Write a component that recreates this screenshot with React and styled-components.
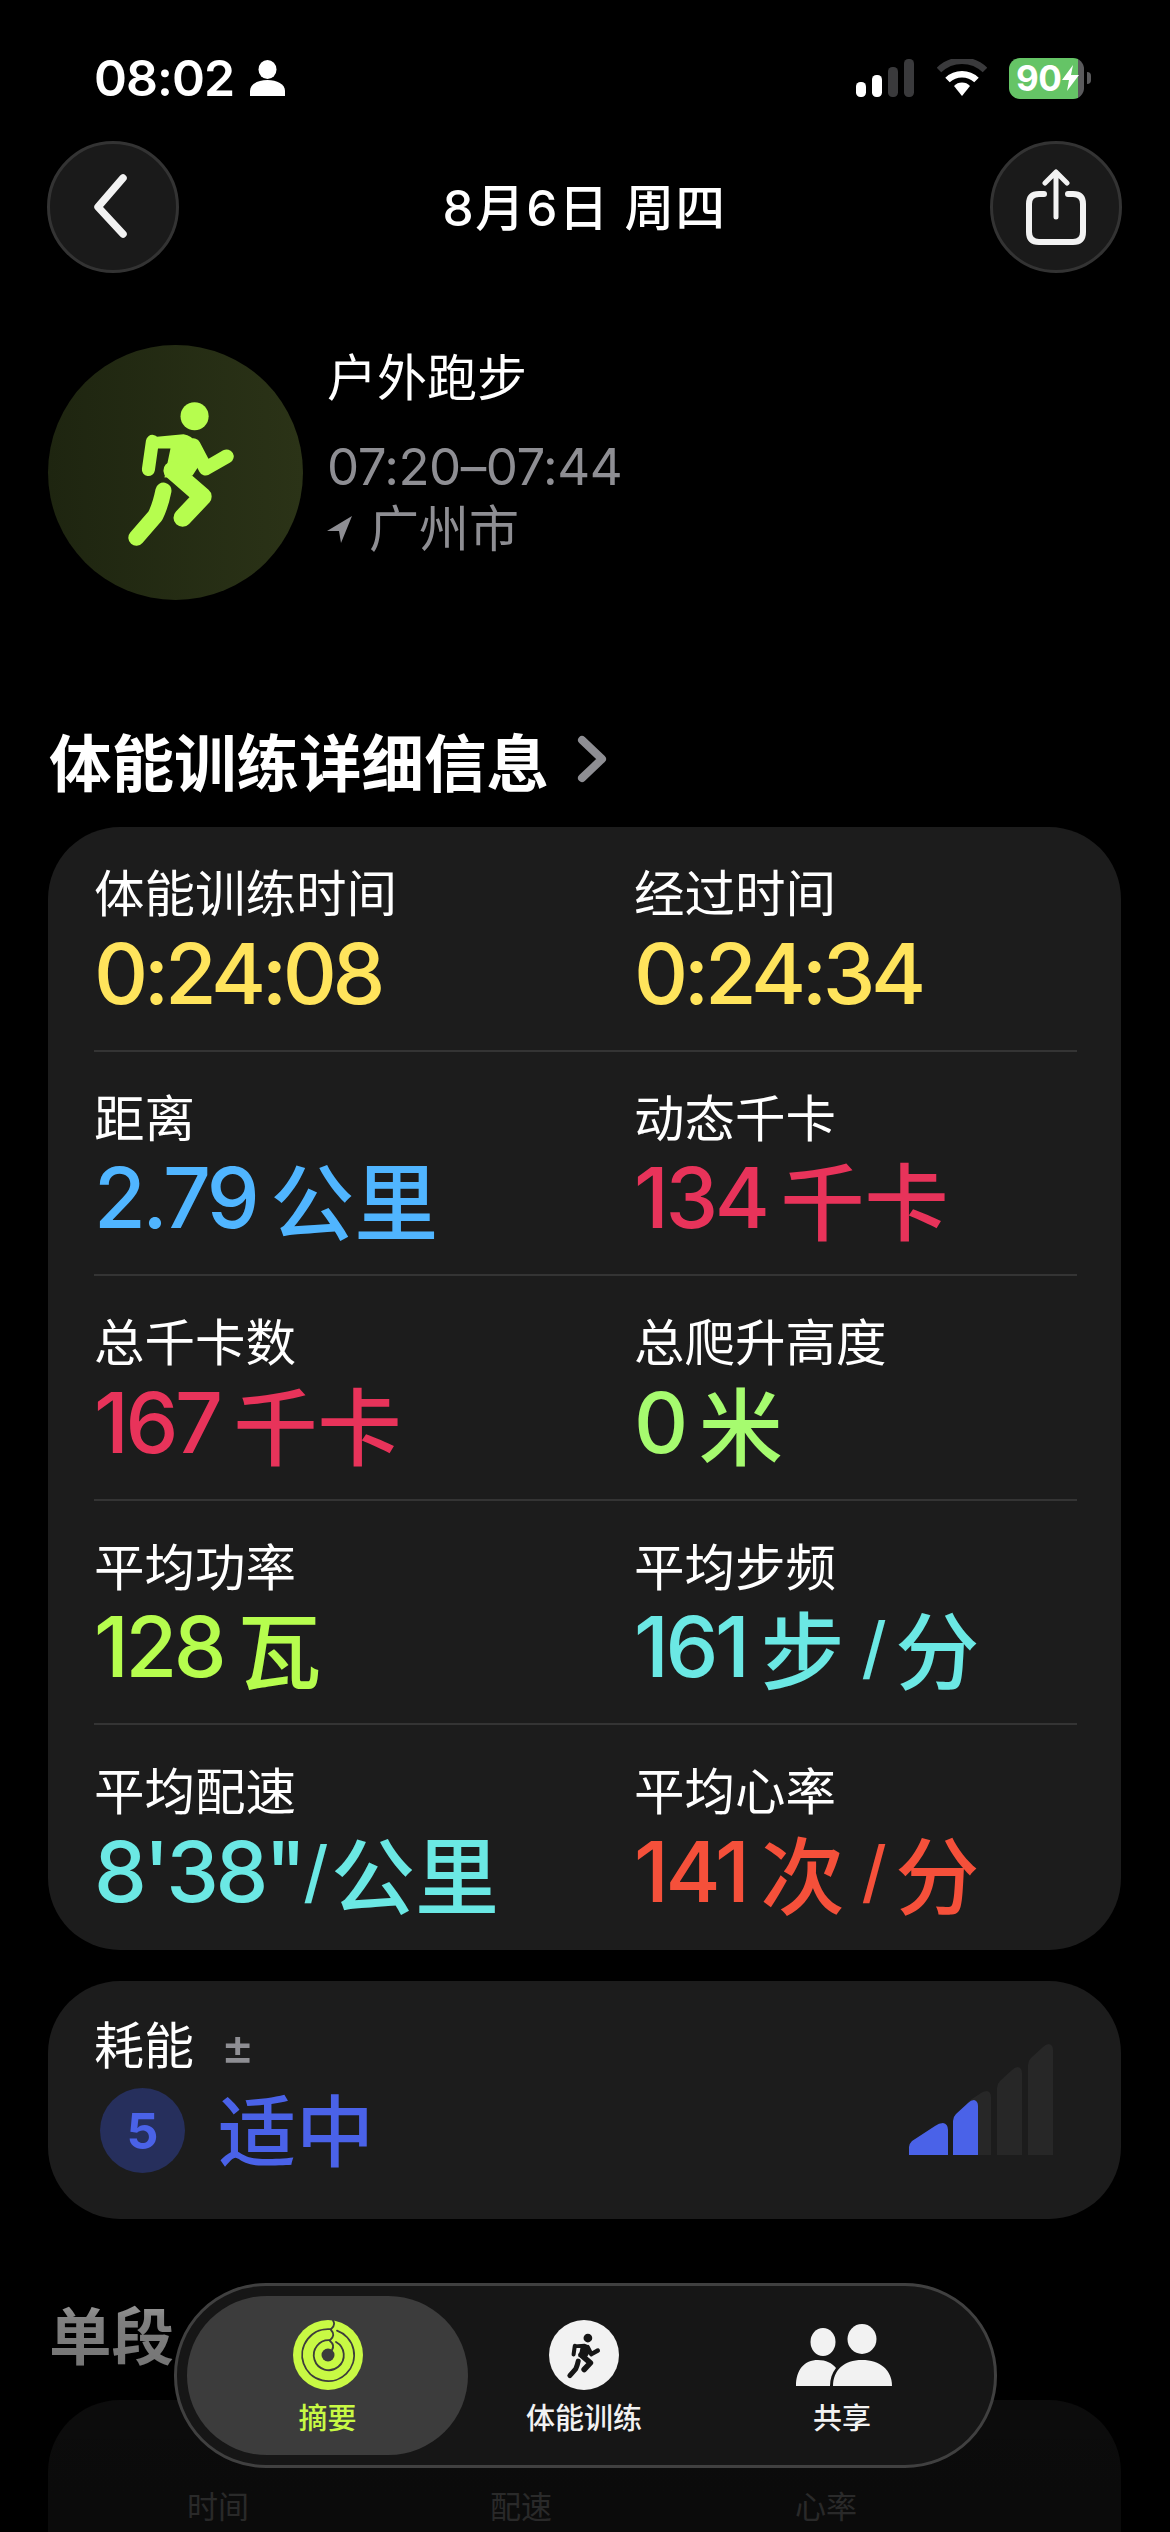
import styled, { createGlobalStyle } from "styled-components";

const GlobalStyle = createGlobalStyle`
  html, body {
    margin: 0;
    padding: 0;
    background: #000;
  }
  * {
    box-sizing: border-box;
  }
`;

const FONT = `Inter, "Noto Sans CJK SC", sans-serif`;

const Page = styled.div`
  position: relative;
  width: 1170px;
  height: 2532px;
  overflow: hidden;
  background: #000;
  color: #fff;
  font-family: ${FONT};
`;

const StatusBar = styled.div`
  display: flex;
  align-items: center;
  justify-content: space-between;
  height: 141px;
  padding: 45px 79px 30px 94px;
`;

const StatusLeft = styled.div`
  display: flex;
  align-items: center;
  gap: 16px;
`;

const Clock = styled.span`
  font-size: 50px;
  font-weight: 600;
  line-height: 50px;
  letter-spacing: -1px;
`;

const StatusRight = styled.div`
  display: flex;
  align-items: center;
  gap: 22px;
`;

const Battery = styled.div`
  display: flex;
  align-items: center;
  gap: 3px;
`;

const BatteryBody = styled.div`
  display: flex;
  align-items: center;
  width: 75px;
  height: 41px;
  border-radius: 11px;
  padding-left: 7px;
  gap: 1px;
  background: linear-gradient(90deg, #65c466 92%, #5a5a5c 92%);
  font-size: 35px;
  font-weight: 700;
  letter-spacing: -0.5px;
  color: #fff;
`;

const BatteryNub = styled.div`
  width: 4px;
  height: 12px;
  border-radius: 0 6px 6px 0;
  background: #5a5a5c;
`;

const NavBar = styled.div`
  display: flex;
  align-items: center;
  justify-content: space-between;
  padding: 0 48px 0 47px;
`;

const RoundButton = styled.div`
  display: flex;
  align-items: center;
  justify-content: center;
  width: 132px;
  height: 132px;
  border-radius: 50%;
  background: #1a1a1a;
  border: 3px solid #333;
`;

const NavTitle = styled.div`
  font-size: 49.5px;
  font-weight: 500;
  letter-spacing: 1.5px;
  margin-bottom: 5px;
`;

const Hero = styled.div`
  display: flex;
  gap: 24px;
  padding-left: 48px;
  margin-top: 72px;
`;

const HeroBadge = styled.div`
  display: flex;
  width: 255px;
  height: 255px;
  border-radius: 50%;
  background: linear-gradient(90deg, #1e2510, #2b3317);
`;

const HeroText = styled.div`
  display: flex;
  flex-direction: column;
`;

const HeroTitle = styled.div`
  font-size: 50px;
  line-height: 60px;
  margin-top: 3px;
`;

const HeroTime = styled.div`
  font-size: 51px;
  line-height: 60px;
  margin-top: 29px;
  color: #8e8e93;
  letter-spacing: -0.5px;
`;

const HeroPlace = styled.div`
  display: flex;
  align-items: center;
  gap: 17px;
  font-size: 50px;
  line-height: 60px;
  margin-top: 2px;
  color: #8e8e93;
`;

const SectionTitle = styled.div`
  display: flex;
  align-items: center;
  gap: 28px;
  padding-left: 49px;
  margin-top: ${(p) => p.$top}px;
  height: 80px;
  font-size: 62.5px;
  font-weight: 700;
`;

const Card = styled.div`
  margin: ${(p) => p.$top}px 49px 0 48px;
  border-radius: 72px;
  background: #1c1c1c;
`;

const MetricList = styled.div`
  padding: 0 44px 0 46px;
`;

const MetricRow = styled.div`
  display: grid;
  grid-template-columns: 540px 1fr;
  height: 224.6px;
  padding-top: 34px;
  border-bottom: 2px solid ${(p) => (p.$last ? "transparent" : "#343434")};
`;

const Metric = styled.div`
  display: flex;
  flex-direction: column;
`;

const Label = styled.div`
  font-size: 50.5px;
  line-height: 66px;
`;

const Value = styled.div`
  display: flex;
  align-items: center;
  height: 92px;
  font-size: 84px;
  font-weight: 500;
  letter-spacing: ${(p) => (p.$time ? -4.4 : -3.4)}px;
  white-space: pre;
  color: ${(p) => p.$color};
`;

const Unit = styled.span`
  font-size: 84px;
  letter-spacing: 0;
  margin-left: ${(p) => p.$gap ?? 14}px;
`;

const Slash = styled.span`
  font-size: 68px;
  margin: 0 ${(p) => (p.$tight ? "6px 0 0" : "12px 0 17px")};
`;

const EffortCard = styled(Card)`
  display: flex;
  align-items: flex-end;
  justify-content: space-between;
  height: 238px;
  padding: 46px 68px 63px 46px;
`;

const EffortLeft = styled.div`
  display: flex;
  flex-direction: column;
`;

const EffortLabel = styled.div`
  display: flex;
  align-items: center;
  gap: 27px;
  font-size: 50px;
  line-height: 50px;
  margin-top: 24px;
`;

const PlusMinus = styled.span`
  font-size: 50px;
  font-weight: 500;
  color: #8e8e93;
`;

const EffortValue = styled.div`
  display: flex;
  align-items: center;
  gap: 33px;
  margin: 8px 0 -27px 6px;
  font-size: 78px;
  font-weight: 500;
  color: #4a62e8;
`;

const EffortLevel = styled.span`
  margin-top: -8px;
`;

const EffortBadge = styled.div`
  display: flex;
  align-items: center;
  justify-content: center;
  width: 85px;
  height: 85px;
  border-radius: 50%;
  background: #262f5c;
  font-size: 50px;
  font-weight: 700;
`;

const SplitHead = styled.div`
  display: grid;
  grid-template-columns: 303px 305px 1fr;
  height: 300px;
  padding: 82px 0 0 139px;
  font-size: 31px;
  color: #6a6a6a;
`;

const Fade = styled.div`
  position: absolute;
  left: 0;
  right: 0;
  top: 2230px;
  bottom: 0;
  background: linear-gradient(
    180deg,
    rgba(0, 0, 0, 0) 0%,
    rgba(0, 0, 0, 0.5) 30%,
    rgba(0, 0, 0, 0.58) 60%,
    rgba(0, 0, 0, 0.62) 100%
  );
`;

const TabBar = styled.div`
  position: absolute;
  left: 174px;
  top: 2283px;
  display: flex;
  width: 823px;
  height: 185px;
  padding: 10px 10px;
  border-radius: 92px;
  background: #161616;
  border: 3px solid #404040;
`;

const Tab = styled.div`
  display: flex;
  flex-direction: column;
  align-items: center;
  width: ${(p) => p.$width}px;
  padding-top: 24px;
  border-radius: 80px;
  background: ${(p) => (p.$active ? "#3c3c3c" : "transparent")};
`;

const TabIconSlot = styled.div`
  display: flex;
  align-items: center;
  justify-content: center;
  height: 70px;
  margin-left: ${(p) => p.$shift || 0}px;
`;

const WorkoutCircle = styled.div`
  display: flex;
  width: 70px;
  height: 70px;
  border-radius: 50%;
  background: #f2f2f2;
`;

const TabLabel = styled.div`
  margin-top: 12px;
  font-size: 29px;
  line-height: 34px;
  font-weight: 500;
  color: ${(p) => (p.$active ? "#c8f944" : "#f2f2f2")};
`;

const metrics = [
  [
    { label: "体能训练时间", color: "#ffe45c", num: "0:24:08", time: true },
    { label: "经过时间", color: "#ffe45c", num: "0:24:34", time: true },
  ],
  [
    { label: "距离", color: "#50b5ff", num: "2.79", unit: "公里" },
    { label: "动态千卡", color: "#e8335a", num: "134", unit: "千卡" },
  ],
  [
    { label: "总千卡数", color: "#e8335a", num: "167", unit: "千卡" },
    { label: "总爬升高度", color: "#a6fb6f", num: "0", unit: "米" },
  ],
  [
    { label: "平均功率", color: "#b6fd4e", num: "128", unit: "瓦" },
    { label: "平均步频", color: "#6be8e4", num: "161", unit: "步", per: "分" },
  ],
  [
    { label: "平均配速", color: "#6be8e4", num: `8'38"`, per: "公里", tight: true },
    { label: "平均心率", color: "#f5503a", num: "141", unit: "次", per: "分" },
  ],
];

const Runner = ({ color, view }) => (
  <svg width="100%" height="100%" viewBox={view}>
    <circle cx="146" cy="71" r="14" fill={color} />
    <path d="M103 92 L135 89 Q143 90 148 98 L155 113 L144 130 L116 132 L122 103 L106 103 Z" fill={color} />
    <path d="M104 96 L100 124" stroke={color} strokeWidth="13" strokeLinecap="round" fill="none" />
    <path d="M145 100 L157 123 L178 111" stroke={color} strokeWidth="14" strokeLinecap="round" strokeLinejoin="round" fill="none" />
    <path d="M124 125 L154 151 L134 172" stroke={color} strokeWidth="18" strokeLinecap="round" strokeLinejoin="round" fill="none" />
    <path d="M115 145 Q112 160 107 170 L88 192" stroke={color} strokeWidth="16" strokeLinecap="round" strokeLinejoin="round" fill="none" />
  </svg>
);

const Rings = () => (
  <svg width="70" height="70" viewBox="0 0 70 70">
    <circle cx="35" cy="35" r="35" fill="#c8f944" />
    <circle cx="35" cy="35" r="6.5" fill="#3c3c3c" />
    <g fill="none" stroke="#3c3c3c" strokeWidth="1.8" strokeLinecap="round">
      <path d="M38 9.2 A26 26 0 1 0 44 10.6" />
      <path d="M37 20.2 A15 15 0 1 0 43 22" />
      <path d="M40 0.4 Q43 5 38 9.2" />
      <path d="M38 10 Q43 15 37 20.2" />
      <path d="M37 21 Q42 25 39 30" />
    </g>
  </svg>
);

const People = () => (
  <svg width="96" height="63" viewBox="0 0 96 63" fill="#f2f2f2">
    <ellipse cx="27" cy="18" rx="12.5" ry="14" />
    <ellipse cx="66" cy="15" rx="14.5" ry="15" />
    <path d="M0 62 C0 46 8 36 22 36 C30 36 36 39 40 44 C36 49 34 55 34 62 Z" />
    <path d="M37 62 C37 46 48 36 66 36 C84 36 96 46 96 62 Z" />
  </svg>
);

const Strength = () => (
  <svg width="144" height="112" viewBox="0 0 144 112">
    <g fill="#272727">
      <path d="M57 111 V64 Q57 60 60 57 L72 49 Q75 47 78 47 Q82 48 82 53 V111 Z" />
      <path d="M88 111 V44 Q88 40 91 37 L103 26 Q106 23 109 23 Q113 24 113 29 V111 Z" />
      <path d="M119 111 V21 Q119 17 122 14 L134 3 Q137 0 140 0 Q144 1 144 6 V111 Z" />
    </g>
    <g fill="#4a62e8">
      <path d="M0 111 V103 Q0 100 3 97 L26 82 Q30 79 34 79 Q39 80 39 86 V111 Z" />
      <path d="M44 111 V77 Q44 73 47 70 L59 59 Q62 56 65 56 Q69 57 69 62 V111 Z" />
    </g>
  </svg>
);

const App = () => (
  <Page>
    <GlobalStyle />
    <StatusBar>
      <StatusLeft>
        <Clock>08:02</Clock>
        <svg width="35" height="36" viewBox="0 0 35 36" fill="#fff">
          <ellipse cx="17.5" cy="9.5" rx="9" ry="9.5" />
          <path d="M0 36 V31 C0 24 8 20 17.5 20 C27 20 35 24 35 31 V36 Z" />
        </svg>
      </StatusLeft>
      <StatusRight>
        <svg width="59" height="38" viewBox="0 0 59 38">
          <rect x="0" y="23" width="10" height="15" rx="4.5" fill="#fff" />
          <rect x="16" y="16" width="10" height="22" rx="4.5" fill="#fff" />
          <rect x="32" y="8" width="10" height="30" rx="4.5" fill="#3a3a3c" />
          <rect x="48" y="0" width="10" height="38" rx="4.5" fill="#3a3a3c" />
        </svg>
        <svg width="50" height="38" viewBox="0 0 50 38" fill="none">
          <path d="M2 11 A33 33 0 0 1 48 11" stroke="#3a3a3c" strokeWidth="6.5" />
          <path d="M10.5 21 A21 21 0 0 1 39.5 21" stroke="#fff" strokeWidth="6.5" />
          <path d="M17 27 A11 11 0 0 1 33 27 L25 37 Z" fill="#fff" />
        </svg>
        <Battery>
          <BatteryBody>
            90
            <svg width="17" height="26" viewBox="0 0 17 26" fill="#fff">
              <path d="M11 0 L0 15 H7 L5 26 L17 10 H9 Z" />
            </svg>
          </BatteryBody>
          <BatteryNub />
        </Battery>
      </StatusRight>
    </StatusBar>

    <NavBar>
      <RoundButton>
        <svg width="50" height="70" viewBox="0 0 50 70" fill="none">
          <path d="M35 6 L10 35 L35 62" stroke="#f2f2f2" strokeWidth="7.5" strokeLinecap="round" strokeLinejoin="round" />
        </svg>
      </RoundButton>
      <NavTitle>8月6日 周四</NavTitle>
      <RoundButton>
        <svg width="62" height="76" viewBox="0 0 62 76" fill="none" stroke="#f2f2f2" strokeLinecap="round" strokeLinejoin="round">
          <path d="M19 25 H14 Q4 25 4 35 V63 Q4 73 14 73 H48 Q58 73 58 63 V35 Q58 25 48 25 H43" strokeWidth="6" />
          <path d="M31 48 V4 M20 14 L31 3 L42 14" strokeWidth="5" />
        </svg>
      </RoundButton>
    </NavBar>

    <Hero>
      <HeroBadge>
        <Runner color="#b6fd4e" view="0 0 254 254" />
      </HeroBadge>
      <HeroText>
        <HeroTitle>户外跑步</HeroTitle>
        <HeroTime>07:20–07:44</HeroTime>
        <HeroPlace>
          <svg width="25" height="27" viewBox="0 0 25 27" fill="#8e8e93">
            <path d="M25 0 L0 15 L12 15 L14 27 Z" />
          </svg>
          广州市
        </HeroPlace>
      </HeroText>
    </Hero>

    <SectionTitle $top={119}>
      体能训练详细信息
      <svg width="30" height="48" viewBox="0 0 30 48" fill="none">
        <path d="M5 5 L25 24 L5 43" stroke="#8e8e93" strokeWidth="8" strokeLinecap="round" strokeLinejoin="round" />
      </svg>
    </SectionTitle>

    <Card $top={28}>
      <MetricList>
        {metrics.map((row, i) => (
          <MetricRow key={i} $last={i === metrics.length - 1}>
            {row.map((m) => (
              <Metric key={m.label}>
                <Label>{m.label}</Label>
                <Value $color={m.color} $time={m.time}>
                  {m.num}
                  {m.unit && <Unit>{m.unit}</Unit>}
                  {m.per && (
                    <>
                      <Slash $tight={m.tight}>/</Slash>
                      <Unit $gap={0}>{m.per}</Unit>
                    </>
                  )}
                </Value>
              </Metric>
            ))}
          </MetricRow>
        ))}
      </MetricList>
    </Card>

    <EffortCard $top={31}>
      <EffortLeft>
        <EffortLabel>
          耗能
          <PlusMinus>±</PlusMinus>
        </EffortLabel>
        <EffortValue>
          <EffortBadge>5</EffortBadge>
          <EffortLevel>适中</EffortLevel>
        </EffortValue>
      </EffortLeft>
      <Strength />
    </EffortCard>

    <SectionTitle $top={74}>单段</SectionTitle>
    <Card $top={27}>
      <SplitHead>
        <span>时间</span>
        <span>配速</span>
        <span>心率</span>
      </SplitHead>
    </Card>

    <Fade />

    <TabBar>
      <Tab $active $width={281}>
        <TabIconSlot>
          <Rings />
        </TabIconSlot>
        <TabLabel $active>摘要</TabLabel>
      </Tab>
      <Tab $width={232}>
        <TabIconSlot>
          <WorkoutCircle>
            <Runner color="#161616" view="21 13 225 225" />
          </WorkoutCircle>
        </TabIconSlot>
        <TabLabel>体能训练</TabLabel>
      </Tab>
      <Tab $width={284}>
        <TabIconSlot $shift={4}>
          <People />
        </TabIconSlot>
        <TabLabel>共享</TabLabel>
      </Tab>
    </TabBar>
  </Page>
);

export default App;
